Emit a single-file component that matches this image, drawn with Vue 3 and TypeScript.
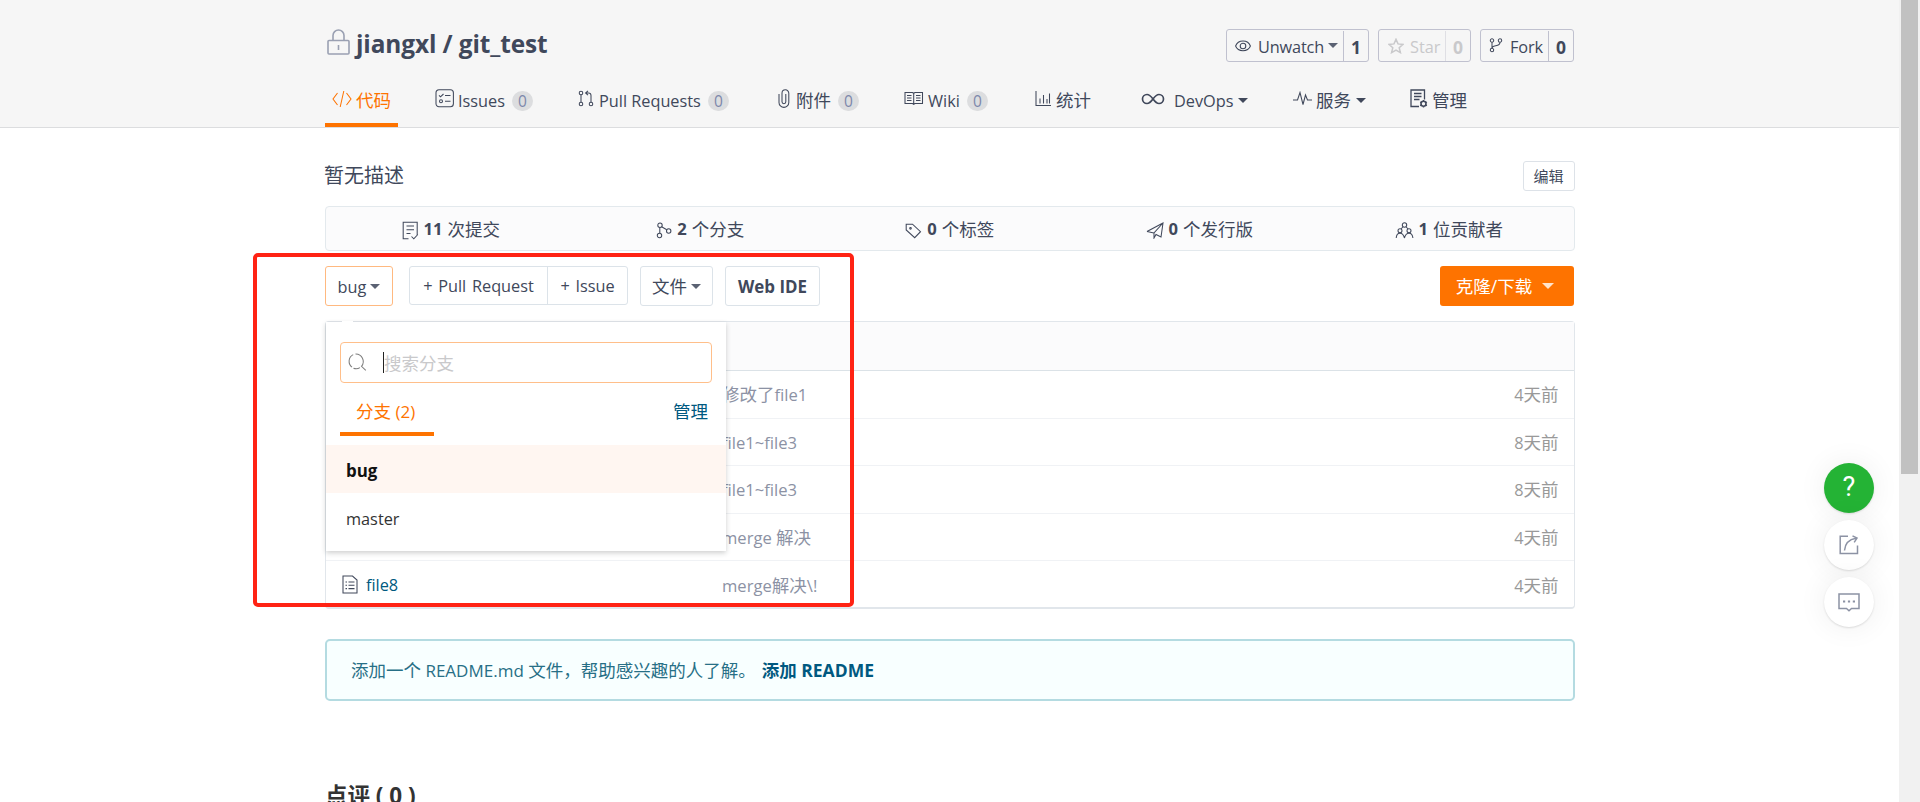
<script setup lang="ts">
interface NavItem {
  id: string
  label: string
  latin: boolean
  count?: number
  caret?: boolean
}

interface Stat {
  id: string
  value: number
  label: string
}

interface FileRow {
  name: string
  message: { text: string; latin: boolean }[]
  days: number
}

const navItems: NavItem[] = [
  { id: 'code', label: '代码', latin: false },
  { id: 'issues', label: 'Issues', latin: true, count: 0 },
  { id: 'pulls', label: 'Pull Requests', latin: true, count: 0 },
  { id: 'attach', label: '附件', latin: false, count: 0 },
  { id: 'wiki', label: 'Wiki', latin: true, count: 0 },
  { id: 'chart', label: '统计', latin: false },
  { id: 'devops', label: 'DevOps', latin: true, caret: true },
  { id: 'service', label: '服务', latin: false, caret: true },
  { id: 'manage', label: '管理', latin: false },
]

const stats: Stat[] = [
  { id: 'commit', value: 11, label: '次提交' },
  { id: 'branch', value: 2, label: '个分支' },
  { id: 'tag', value: 0, label: '个标签' },
  { id: 'release', value: 0, label: '个发行版' },
  { id: 'people', value: 1, label: '位贡献者' },
]

const files: FileRow[] = [
  { name: '', message: [{ text: '修改了', latin: false }, { text: 'file1', latin: true }], days: 4 },
  { name: '', message: [{ text: 'file1~file3', latin: true }], days: 8 },
  { name: '', message: [{ text: 'file1~file3', latin: true }], days: 8 },
  { name: '', message: [{ text: 'merge ', latin: true }, { text: '解决', latin: false }], days: 4 },
  { name: 'file8', message: [{ text: 'merge', latin: true }, { text: '解决', latin: false }, { text: '\\!', latin: true }], days: 4 },
]

const branches = ['bug', 'master']
const current = 'bug'
</script>

<template>
  <div class="page">
    <header class="header">
      <div class="wrap">
        <div class="title-row">
          <svg class="lock" width="23" height="26" viewBox="0 0 23 26">
            <rect x="1" y="11.5" width="21" height="13.5" rx="1" />
            <path d="M6 11.5V6.500a5.500 5.500 0 0 1 11 0v5M11.500 16v5" />
          </svg>
          <h1>jiangxl / git_test</h1>
          <div class="actions">
            <div class="action watch">
              <span class="main">
                <svg width="16" height="12" viewBox="0 0 16 12"><path d="M.6 6C3-.8 13-.8 15.4 6 13 12.200 3 12.200.6 6z" /><circle cx="8" cy="6" r="2.800" /></svg>
                <span class="en">Unwatch</span><i class="caret"></i>
              </span>
              <b>1</b>
            </div>
            <div class="action star">
              <span class="main">
                <svg width="16" height="16" viewBox="0 0 16 16"><path d="M8 1.300l2 4.600 5 .5-3.800 3.300 1.200 4.900L8 12l-4.400 2.600 1.200-4.900L1 6.400l5-.5z" stroke-width="1.500" /></svg>
                <span class="en">Star</span>
              </span>
              <b>0</b>
            </div>
            <div class="action fork">
              <span class="main">
                <svg width="14" height="15" viewBox="0 0 14 15"><circle cx="3" cy="2.500" r="1.700" /><circle cx="11" cy="2.500" r="1.700" /><circle cx="3" cy="12" r="1.700" /><path d="M3 4.200v6.100M11 4.200c0 3-2 3.200-4.500 3.600C4.500 8.100 3 8.500 3 10.300" /></svg>
                <span class="en">Fork</span>
              </span>
              <b>0</b>
            </div>
          </div>
        </div>

        <nav class="nav">
          <a v-for="n in navItems" :key="n.id" :class="['nav-item', n.id]">
            <svg v-if="n.id === 'code'" width="20" height="18" viewBox="0 0 20 18"><path d="M5.500 3L1 9l4.500 6M14.500 3L19 9l-4.500 6M11.800 1L8.200 17" /></svg>
            <svg v-else-if="n.id === 'issues'" width="20" height="19" viewBox="0 0 20 19"><rect x="1" y=".8" width="17.400" height="17" rx="3" /><path d="M4 6.300l1.500 1.500L8.500 5M10 6.500h5.500M10 12.300h5.500" /><circle cx="6" cy="12.300" r="1.500" /></svg>
            <svg v-else-if="n.id === 'pulls'" width="16" height="17" viewBox="0 0 16 17"><circle cx="3" cy="3" r="1.800" /><circle cx="3" cy="14" r="1.800" /><circle cx="13" cy="14" r="1.800" /><path d="M3 4.800v7.400M13 12.200V5.500c0-1.600-.8-2.500-2.300-2.500H8M10 .9L7.600 3 10 5.100" /></svg>
            <svg v-else-if="n.id === 'attach'" width="12" height="19" viewBox="0 0 12 19"><path d="M1 5v8.500a4.700 4.700 0 0 0 9.800 0V4.200a3.300 3.300 0 0 0-6.800 0v8.600a1.900 1.900 0 0 0 3.800 0V5" /></svg>
            <svg v-else-if="n.id === 'wiki'" width="20" height="15" viewBox="0 0 20 15"><path d="M1 1.500h7.500L9.700 2.300 11 1.500h7.500v11H11l-1.300.8-1.200-.8H1zM9.700 2.500v10.500M3 4.500h4.500M3 7h4.500M3 9.500h4.500M12 4.500h4.500M12 7h4.500M12 9.500h4.500" /></svg>
            <svg v-else-if="n.id === 'chart'" width="17" height="17" viewBox="0 0 17 17"><path d="M1 1v14.500h15M5 13.500V8.500M8.500 13.500V5M12 13.500V9M14.500 13.500V3.500" /></svg>
            <svg v-else-if="n.id === 'devops'" width="24" height="12" viewBox="0 0 24 12"><path d="M12 6c-2-2.700-3.600-4.500-6-4.500a4.500 4.500 0 0 0 0 9c2.400 0 4-1.800 6-4.500s3.600-4.500 6-4.500a4.500 4.500 0 0 1 0 9c-2.400 0-4-1.800-6-4.500z" stroke-width="1.700" /></svg>
            <svg v-else-if="n.id === 'service'" width="19" height="15" viewBox="0 0 19 15"><path d="M0 9h4.500L7 1.500l3 12L12.500 4l2 5H19" /></svg>
            <svg v-else width="18" height="19" viewBox="0 0 18 19"><path d="M9 17.500H1V1h13.500v9.500M4 4.500h7.500M4 7.500h7.500M4 10.500h5.500" stroke-width="1.300" /><circle cx="13.500" cy="14.800" r="2.500" stroke-width="1.600" /><path d="M13.500 11v1M13.500 17.500v1M10.200 13l.9.500M16 16.200l.9.500M10.200 16.700l.9-.5M16 13.500l.9-.5" stroke-width="1.400" /></svg>
            <span :class="{ en: n.latin }">{{ n.label }}</span>
            <em v-if="n.count !== undefined">{{ n.count }}</em>
            <i v-if="n.caret" class="caret"></i>
          </a>
        </nav>
      </div>
    </header>

    <main class="wrap">
      <div class="desc">
        <span>暂无描述</span>
        <button class="edit">编辑</button>
      </div>

      <div class="stats">
        <div v-for="s in stats" :key="s.id" :class="['stat', s.id]">
          <svg v-if="s.id === 'commit'" width="17" height="19" viewBox="0 0 17 19"><path d="M6.500 17.800H1.200V1.200h14v13M4.500 5h7.500M4.500 8.700h7.500M4.500 12.400h4M9.500 15.500l2.300 2.300 4-4.300" /></svg>
          <svg v-else-if="s.id === 'branch'" width="16" height="17" viewBox="0 0 16 17"><circle cx="4" cy="3.200" r="2.200" /><circle cx="3.500" cy="13.500" r="2.200" /><circle cx="12.700" cy="9" r="2.200" /><path d="M3.800 5.400v5.900M5.600 4.800l5.200 3" /></svg>
          <svg v-else-if="s.id === 'tag'" width="17" height="16" viewBox="0 0 17 16"><path d="M1.200 1.200h6.300l8 7.500-5.800 6L1.200 7z" /><circle cx="5.500" cy="5.300" r=".8" /></svg>
          <svg v-else-if="s.id === 'release'" width="18" height="17" viewBox="0 0 18 17"><path d="M1 9.500L17 1l-2 14-5-2.500L8 16v-5L17 1M1 9.500L8 11" /></svg>
          <svg v-else width="19" height="17" viewBox="0 0 19 17"><circle cx="9.500" cy="3" r="2.200" /><circle cx="5" cy="8.800" r="2" /><circle cx="14" cy="8.800" r="2" /><path d="M7.800 5L6 7M11.200 5l1.900 2M1.200 16c.2-3 1.500-4.800 3.800-4.800S8.700 13 9.400 16c.8-3 2.300-4.800 4.600-4.800s3.600 1.800 3.900 4.800" /></svg>
          <b>{{ s.value }}</b><span>{{ s.label }}</span>
        </div>
      </div>

      <div class="toolbar">
        <div class="branch-picker">
          <button class="btn picked"><span class="en">bug</span><i class="caret"></i></button>
          <section class="dropdown">
            <div class="notch"></div>
            <div class="search">
              <svg width="19" height="19" viewBox="0 0 19 19"><path d="M4 14.200A7.500 7.500 0 0 1 5.200 1.600M7.500 1A7.500 7.500 0 0 1 13.500 13.300L17.800 17.300M12 14.600A7.500 7.500 0 0 1 5.500 15.200" /></svg>
              <span class="cursor"></span>
              <span>搜索分支</span>
            </div>
            <div class="tabs">
              <span class="tab">分支<span class="en"> (2)</span></span>
              <a>管理</a>
            </div>
            <div v-for="b in branches" :key="b" :class="['branch-item', { active: b === current }]">{{ b }}</div>
          </section>
        </div>
        <div class="group">
          <button class="pr"><span class="en">+ Pull Request</span></button>
          <button class="is"><span class="en">+ Issue</span></button>
        </div>
        <button class="btn file"><span>文件</span><i class="caret"></i></button>
        <button class="btn ide">Web IDE</button>
        <button class="clone">克隆/下载<i class="caret"></i></button>
      </div>

      <div class="table">
        <div class="thead"></div>
        <div v-for="(f, i) in files" :key="i" class="row">
          <div class="name">
            <template v-if="f.name">
              <svg width="16" height="19" viewBox="0 0 16 19"><path d="M1 1h9.500L15 5v13H1zM3.500 7h1.500M3.500 10.300h1.500M3.500 13.600h1.500M6.500 7h6M6.500 10.300h6M6.500 13.600h6" /></svg>
              <span class="en">{{ f.name }}</span>
            </template>
          </div>
          <div class="msg"><span v-for="(m, k) in f.message" :key="k" :class="{ en: m.latin }">{{ m.text }}</span></div>
          <div class="time"><span class="en">{{ f.days }}</span>天前</div>
        </div>
      </div>

      <div class="readme">
        <span>添加一个<span class="en"> README.md </span>文件，帮助感兴趣的人了解。</span>
        <b>添加<span class="enb"> README</span></b>
      </div>

      <h2>点评 ( 0 )</h2>
    </main>

    <div class="highlight"></div>

    <aside class="floats">
      <div class="circle help">?</div>
      <div class="circle">
        <svg width="20" height="20" viewBox="0 0 20 20"><path d="M9 1.200H1.200v17.300h17.300v-8M5.500 15.500C6 8.500 10 4.500 17 3.300M13.500.8l4.500 2.300-2.800 4.300" /></svg>
      </div>
      <div class="circle">
        <svg width="22" height="19" viewBox="0 0 22 19"><path d="M1 1h20v14.500h-7.500L11 17.700l-2.500-2.200H1z" /><path d="M5 8.500h2.200M9.900 8.500h2.200M14.800 8.500H17" stroke-width="2.200" /></svg>
      </div>
    </aside>

    <div class="scrollbar"><div class="thumb"></div></div>
  </div>
</template>

<style>
html,
body {
  overflow: hidden;
  background: #fff;
}
</style>

<style scoped>
.page {
  position: relative;
  width: 1920px;
  height: 802px;
  overflow: hidden;
  color: #40485b;
  font-family: 'Open Sans', 'Noto Sans CJK SC', sans-serif;
  font-size: 17.5px;
  line-height: 24px;
  white-space: pre;
}
.page * {
  box-sizing: border-box;
}
button {
  font: inherit;
  color: inherit;
  background: #fff;
  padding: 0;
  margin: 0;
}
svg {
  display: block;
  flex: none;
  fill: none;
  stroke: currentColor;
  stroke-width: 1.05;
}
.wrap {
  width: 1249.5px;
  margin-left: 325px;
}
.en {
  font-size: 16.3px;
}
.caret {
  flex: none;
  border: 5px solid transparent;
  border-top: 5px solid #5b6273;
  border-bottom: 0;
}
.header {
  height: 128px;
  background: #f6f6f6;
  border-bottom: 1px solid #dcdddf;
}
.title-row {
  display: flex;
  height: 73px;
  padding-top: 29px;
}
.lock {
  margin-left: 2px;
  color: #9aa0b2;
  stroke-width: 1.6;
}
h1 {
  margin: -1px 0 0 6px;
  font-size: 24.4px;
  line-height: 32px;
  letter-spacing: -0.1px;
}
.actions {
  display: flex;
  gap: 9px;
  margin-left: auto;
  margin-right: 0.5px;
}
.action {
  display: flex;
  height: 33px;
  border: 1px solid #c0c1cf;
  border-radius: 3px;
}
.main {
  display: flex;
  flex: 1;
  align-items: center;
}
.main .en {
  padding-top: 2px;
}
.action b {
  display: flex;
  align-items: center;
  justify-content: center;
  width: 25px;
  margin-top: 1px;
  padding-top: 1px;
  border-left: 1px solid #c0c1cf;
}
.watch {
  width: 143px;
}
.watch .main {
  padding-left: 8px;
}
.watch .en {
  margin: 0 4px 0 7px;
  letter-spacing: -0.15px;
}
.star {
  width: 93px;
  color: #c9c9cb;
}
.star b {
  border-color: #dfdfe4;
}
.star .main {
  padding-left: 9px;
}
.star .en {
  margin-left: 6px;
}
.fork {
  width: 94px;
}
.fork .main {
  padding-left: 8px;
}
.fork .en {
  margin-left: 7px;
  letter-spacing: -0.15px;
}
.nav {
  display: grid;
  grid-template-columns: 110px 143px 200px 126px 131px 106px 152px 117px auto;
  height: 54px;
}
.nav-item {
  display: flex;
  align-items: center;
  height: 54px;
}
.nav-item svg {
  margin-right: 4px;
  margin-bottom: 3px;
}
.nav-item .en {
  padding-top: 2px;
}
.code {
  width: 73px;
  padding-left: 7px;
  color: #fe7300;
  border-bottom: 4px solid #fe7300;
  padding-top: 4px;
}
.nav-item em {
  width: 21px;
  height: 20px;
  margin-left: 7px;
  margin-top: 1px;
  border-radius: 10px;
  background: #dcdddf;
  color: #7c88ab;
  font-size: 15.5px;
  font-style: normal;
  line-height: 20px;
  text-align: center;
}
.nav-item .caret {
  margin-left: 5px;
  border-top-color: #40485b;
}
.issues .en {
  margin-left: -1px;
}
.pulls svg {
  margin-right: 5px;
}
.attach svg {
  margin-right: 6px;
}
.devops svg {
  margin-right: 9px;
}
.desc {
  display: flex;
  align-items: center;
  justify-content: space-between;
  height: 30px;
  margin-top: 33px;
  font-size: 20px;
}
.desc span {
  margin-left: -1px;
}
.edit {
  width: 52px;
  height: 30px;
  border: 1px solid #dde2e8;
  border-radius: 3px;
  font-size: 15px;
}
.stats {
  display: flex;
  height: 45px;
  margin-top: 15px;
  border: 1px solid #e3e9ed;
  border-radius: 4px;
  background: #fbfbfc;
}
.stat {
  display: flex;
  flex: 1;
  align-items: center;
  justify-content: center;
}
.stat svg {
  margin: 4px 5px 0 0;
}
.stat b {
  font-size: 16.6px;
}
.stat span {
  margin-left: 5px;
}
.toolbar {
  display: flex;
  height: 40px;
  margin-top: 15px;
}
.btn {
  display: flex;
  align-items: center;
  justify-content: center;
  height: 40px;
  border: 1px solid #dce3e9;
  border-radius: 3px;
}
.branch-picker {
  position: relative;
  width: 84px;
}
.picked {
  width: 68px;
  border-color: #ffb980;
}
.toolbar .btn .en,
.group .en {
  padding-top: 1px;
}
.btn .caret {
  margin-left: 4px;
}
.group {
  display: flex;
  width: 219px;
  height: 39px;
  border: 1px solid #dce3e9;
  border-radius: 3px;
}
.group button {
  display: flex;
  align-items: center;
  justify-content: center;
  border: 0;
  background: none;
}
.group .en {
  word-spacing: 1.500px;
}
.group .pr {
  width: 138px;
  border-right: 1px solid #dce3e9;
}
.group .is {
  flex: 1;
}
.file {
  width: 73px;
  margin-left: 12px;
}
.ide {
  width: 95px;
  margin-left: 12px;
  padding-top: 1px;
  font-size: 16.9px;
  font-weight: 700;
}
.clone {
  display: flex;
  align-items: center;
  justify-content: center;
  width: 134px;
  height: 40px;
  margin-left: auto;
  margin-right: 0.5px;
  padding-right: 4px;
  border: 0;
  border-radius: 3px;
  background: #fe7300;
  color: #fff;
}
.clone .caret {
  margin-left: 10px;
  border-width: 6px 6px 0;
  border-top-color: #ffe3cc;
}
.dropdown {
  position: absolute;
  z-index: 2;
  left: 1px;
  top: 56px;
  width: 400px;
  height: 229px;
  padding-top: 20px;
  background: #fff;
  box-shadow: 0 2px 5px rgba(34, 36, 38, 0.22);
}
.notch {
  position: absolute;
  left: 16px;
  top: -1px;
  width: 11px;
  height: 1px;
  background: #fff;
}
.search {
  display: flex;
  align-items: center;
  width: 372px;
  height: 41px;
  margin-left: 14px;
  padding-left: 7px;
  border: 1px solid #ffbf8a;
  border-radius: 4px;
  color: #c9c9cb;
}
.search svg {
  color: #7d7d7d;
}
.cursor {
  width: 1px;
  height: 21px;
  margin-left: 16px;
  background: #222;
}
.tabs {
  display: flex;
  justify-content: space-between;
  height: 53px;
  margin: 0 18px 9px 14px;
}
.tab {
  height: 53px;
  width: 94px;
  padding: 16px 0 0 16px;
  border-bottom: 4px solid #fe7300;
  color: #fe7300;
}
.tab .en {
  font-size: 17px;
}
.tabs a {
  padding-top: 16px;
  color: #005980;
}
.branch-item {
  height: 48px;
  padding-left: 20px;
  color: #333;
  font-size: 16.3px;
  line-height: 52px;
}
.active {
  background: #fff6f1;
  color: #111;
  font-size: 16.9px;
  font-weight: 700;
}
.table {
  height: 288px;
  margin-top: 15px;
  border: 1px solid #e1e6eb;
  border-bottom-width: 2px;
  border-radius: 4px;
}
.thead {
  height: 49px;
  border-bottom: 1px solid #dbe2e7;
  background: #fbfbfc;
}
.row {
  display: flex;
  align-items: center;
  height: 47.5px;
  padding: 1px 15px 0 16px;
  border-bottom: 1px solid #f0f2f5;
}
.row:last-child {
  border: 0;
}
.name {
  display: flex;
  align-items: center;
  gap: 8px;
  width: 380px;
  color: #005980;
}
.name svg {
  color: #40485b;
  margin-bottom: 2px;
}
.msg {
  flex: 1;
  color: #8c92a4;
}
.msg .en {
  font-size: 16.6px;
}
.time {
  color: #999;
}
.readme {
  display: flex;
  align-items: center;
  gap: 6px;
  height: 62px;
  margin-top: 30px;
  padding-left: 24px;
  border: 2px solid #b4dbe1;
  border-radius: 5px;
  background: #f8ffff;
  color: #276f86;
}
.readme .en {
  font-size: 17px;
}
.readme b {
  color: #005980;
}
.enb {
  font-size: 17.5px;
}
h2 {
  margin: 79px 0 0 0;
  font-size: 22.5px;
  line-height: 32px;
  color: #333;
}
.highlight {
  position: absolute;
  z-index: 3;
  left: 253px;
  top: 253px;
  width: 601px;
  height: 354px;
  border: 4px solid #ff2314;
  border-radius: 5px;
}
.floats {
  position: absolute;
  left: 1824px;
  top: 463px;
  display: grid;
  gap: 7px;
}
.circle {
  display: flex;
  align-items: center;
  justify-content: center;
  width: 50px;
  height: 50px;
  border-radius: 50%;
  background: #fff;
  color: #8c92a4;
  box-shadow: 0 1px 2px rgba(0, 0, 0, 0.12), 0 0 30px rgba(0, 0, 0, 0.07);
}
.circle svg {
  stroke-width: 1.5;
}
.help {
  padding-bottom: 2px;
  background: #24b335;
  color: #fff;
  font: 400 27px Roboto, sans-serif;
}
.scrollbar {
  position: absolute;
  right: 0;
  top: 0;
  width: 21px;
  height: 802px;
  padding: 0 2px;
  background: #f1f1f1;
}
.thumb {
  height: 474px;
  background: #c1c1c1;
}
</style>
